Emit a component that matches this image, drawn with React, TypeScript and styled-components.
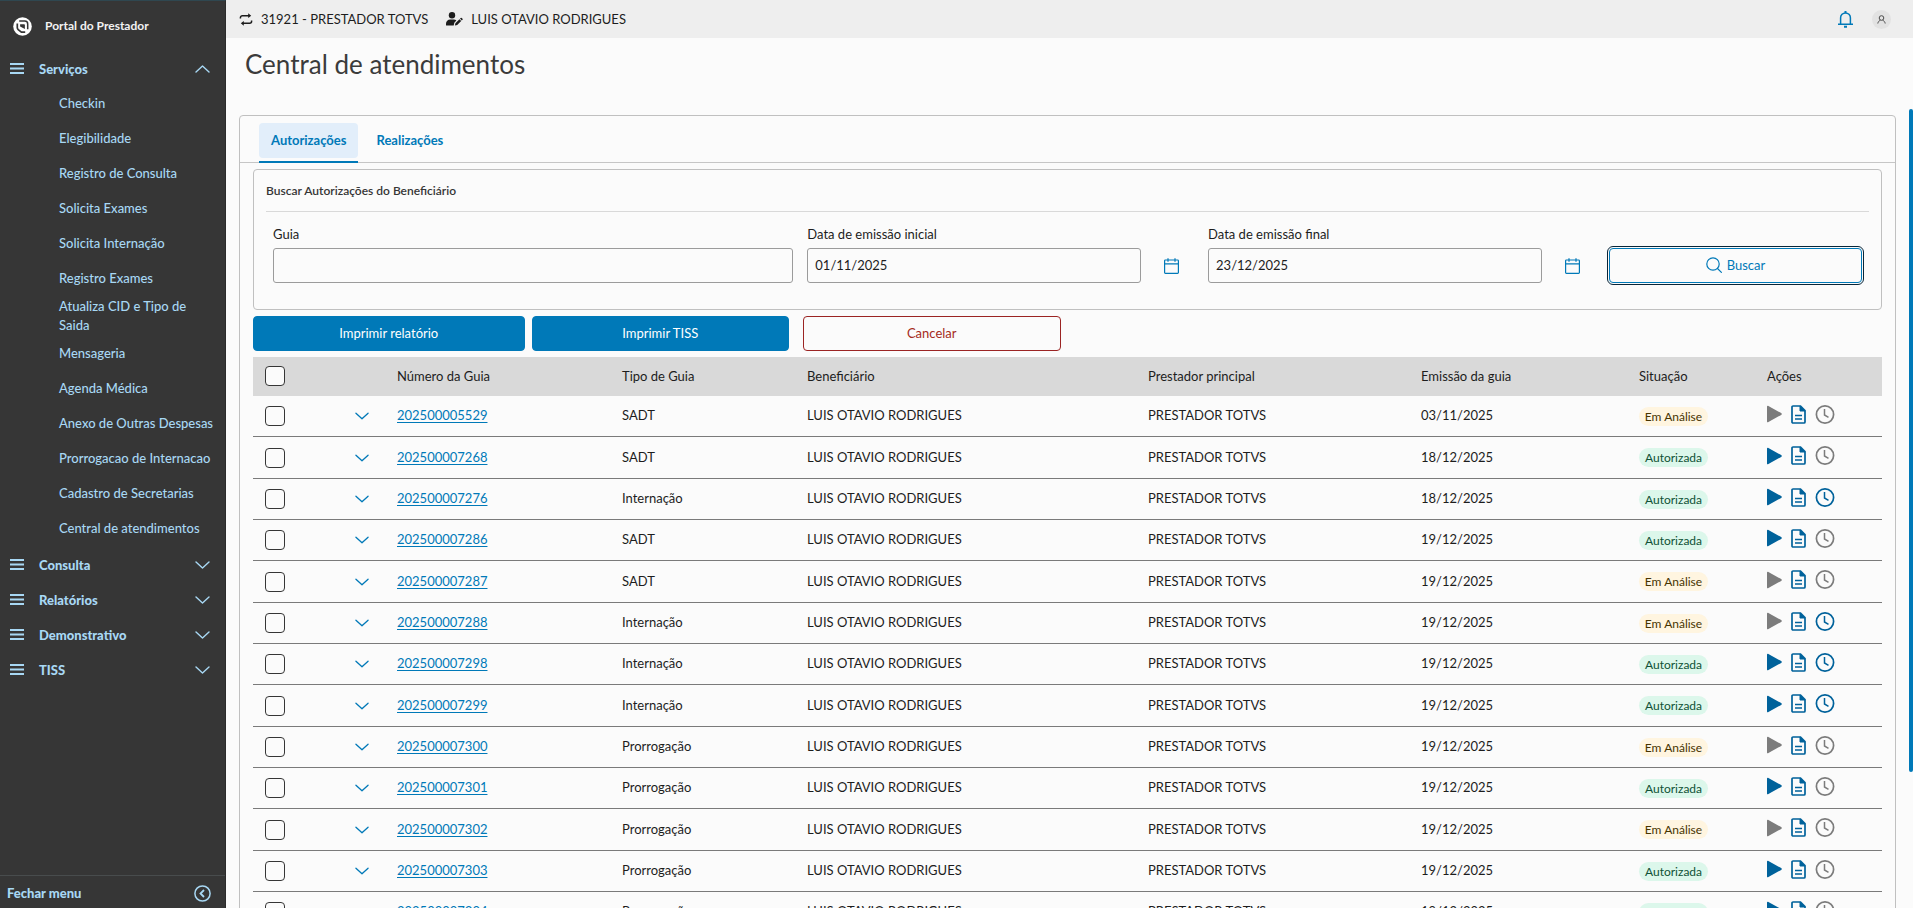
import React from 'react';
import styled, { createGlobalStyle, css } from 'styled-components';

const blue = '#0079b8';
const deepBlue = '#00629b';
const gray = '#7c7c7c';

const GlobalStyle = createGlobalStyle`
  *, *::before, *::after { box-sizing: border-box; }
  body {
    margin: 0;
    background: #fbfbfb;
    color: #1d1d1d;
    font-family: Lato, "Liberation Sans", sans-serif;
    font-size: 13px;
    line-height: 20px;
  }
  button, input { font: inherit; color: inherit; }
  svg { display: block; }
`;

const Shell = styled.div`
  display: flex;
  height: 100vh;
  overflow: hidden;
`;

/* ---------- side menu ---------- */

const Sidebar = styled.aside`
  flex: none;
  display: flex;
  flex-direction: column;
  width: 226px;
  background: #363636;
  border-top: 1px solid #2f4750;
  border-right: 1px solid #2b2b2b;
  color: #a8d8f4;
`;

const Brand = styled.div`
  display: flex;
  align-items: center;
  gap: 13px;
  height: 50px;
  padding-left: 13px;
  color: #f2f2f2;
  font-size: 12px;
  font-weight: 700;
`;

const MenuNav = styled.nav`
  flex: 1;
`;

const MenuGroup = styled.button`
  display: flex;
  align-items: center;
  width: 100%;
  height: 35px;
  padding: 0 15px 0 10px;
  border: 0;
  background: none;
  font-weight: 900;
  text-align: left;
`;

const GroupLabel = styled.span`
  flex: 1;
  margin-left: 15px;
`;

const SubMenu = styled.ul`
  margin: 0;
  padding: 0 0 1px;
  list-style: none;
`;

const SubItem = styled.li`
  display: flex;
  align-items: center;
  min-height: 35px;
  padding: 1px 10px 1px 59px;
`;

const SubLink = styled.a`
  color: inherit;
  font-weight: 500;
  line-height: 19px;
  text-decoration: none;
`;

const CloseMenu = styled.button`
  display: flex;
  align-items: center;
  justify-content: space-between;
  height: 33px;
  padding: 2px 14px 0 7px;
  border: 0;
  border-top: 1px solid #484c4d;
  background: none;
  font-weight: 900;
`;

/* ---------- top bar and page ---------- */

const Main = styled.div`
  position: relative;
  flex: 1;
  min-width: 0;
  display: flex;
  flex-direction: column;
`;

const TopBar = styled.header`
  flex: none;
  display: flex;
  align-items: center;
  height: 38px;
  padding: 0 22px 0 13px;
  background: #eeeeee;
`;

const TopInfo = styled.span`
  display: flex;
  align-items: center;
  gap: 8px;
  margin-right: 18px;
`;

const TopActions = styled.div`
  display: flex;
  align-items: center;
  gap: 19px;
  margin-left: auto;
`;

const IconButton = styled.button`
  display: flex;
  align-items: center;
  justify-content: center;
  padding: 0;
  border: 0;
  background: none;
  color: ${blue};
`;

const Avatar = styled.span`
  display: flex;
  align-items: center;
  justify-content: center;
  width: 19px;
  height: 19px;
  border-radius: 50%;
  background: #e2e2e2;
  color: #4a4a4a;
`;

const Content = styled.main`
  flex: 1;
  min-height: 0;
  overflow: hidden;
  padding: 0 17px 0 13px;
`;

const Title = styled.h1`
  margin: 0;
  padding: 8px 6px 33px;
  color: #3b3b3b;
  font-size: 26px;
  font-weight: 400;
  line-height: 36px;
`;

const ScrollThumb = styled.div`
  position: absolute;
  top: 109px;
  right: 0;
  width: 4px;
  height: 73vh;
  border-radius: 2px;
  background: ${blue};
`;

const Panel = styled.section`
  border: 1px solid #c0c0c0;
  border-radius: 4px 4px 0 0;
`;

const Tabs = styled.div`
  display: flex;
  gap: 6px;
  height: 47px;
  padding: 7px 19px 0;
  border-bottom: 1px solid #c6c6c6;
`;

const Tab = styled.button<{ $active?: boolean }>`
  height: 40px;
  padding: 0;
  border: 0;
  border-bottom: 2px solid ${(p) => (p.$active ? blue : 'transparent')};
  background: none;
  color: ${blue};
  font-weight: 700;
`;

const TabFace = styled.span<{ $active?: boolean }>`
  display: block;
  height: 35px;
  margin-bottom: 3px;
  padding: 0 12px;
  border-radius: 4px;
  background: ${(p) => (p.$active ? '#e2eefa' : 'none')};
  line-height: 34px;
`;

const PanelBody = styled.div`
  padding: 6px 13px 0;
`;

/* ---------- search form ---------- */

const SearchBox = styled.form`
  height: 141px;
  padding: 11px 12px;
  border: 1px solid #c0c0c0;
  border-radius: 4px;
`;

const SearchTitle = styled.h2`
  margin: 0 0 12px;
  padding-bottom: 10px;
  border-bottom: 1px solid #d9d9d9;
  color: #363636;
  font-size: 12px;
  font-weight: 600;
  line-height: 20px;
`;

const SearchGrid = styled.div`
  display: grid;
  grid-template-columns: repeat(12, 1fr);
  align-items: end;
`;

const Field = styled.div<{ $span: number }>`
  grid-column: span ${(p) => p.$span};
  padding: 0 7px;
`;

const FieldLabel = styled.label`
  display: block;
  margin-bottom: 4px;
`;

const FieldRow = styled.div`
  display: flex;
  align-items: center;
`;

const TextInput = styled.input`
  flex: 1;
  min-width: 0;
  height: 35px;
  padding: 0 7px 1px;
  border: 1px solid #9b9b9b;
  border-radius: 3px;
  background: #fbfbfb;
`;

const CalendarButton = styled(IconButton)`
  width: 53px;
  padding-left: 8px;
`;

const buttonBase = css`
  display: flex;
  align-items: center;
  justify-content: center;
  gap: 5px;
  width: 100%;
  height: 35px;
  padding: 0 0 1px;
  border-radius: 4px;
`;

const SearchButton = styled.button`
  ${buttonBase}
  border: 1px solid ${blue};
  outline: 1px solid #08263a;
  outline-offset: 1px;
  background: #fbfbfb;
  color: ${blue};
`;

const ActionGrid = styled.div`
  display: grid;
  grid-template-columns: repeat(6, 1fr);
  margin: 6px 0;
`;

const ActionSlot = styled.div<{ $first?: boolean }>`
  padding: ${(p) => (p.$first ? '0' : '0 7px')};
`;

const ActionButton = styled.button<{ $danger?: boolean }>`
  ${buttonBase}
  border: 1px solid ${(p) => (p.$danger ? '#9b2423' : blue)};
  background: ${(p) => (p.$danger ? '#fbfbfb' : blue)};
  color: ${(p) => (p.$danger ? '#a52a20' : '#ffffff')};
`;

/* ---------- table ---------- */

const Table = styled.table`
  width: 100%;
  table-layout: fixed;
  border-spacing: 0;
`;

const HeadCell = styled.th`
  height: 39px;
  padding: 0 0 1px 12px;
  background: #d9d9d9;
  font-weight: 400;
  text-align: left;
`;

const BodyRow = styled.tr`
  height: 41px;
  &:nth-child(3n + 2) { height: 42px; }
`;

const Cell = styled.td`
  padding: 0 0 2px 12px;
  border-bottom: 1px solid #7a7a7a;
`;

const CheckCell = styled(Cell)`
  padding-bottom: 0;
`;

const ActionsCell = styled(Cell)`
  padding-bottom: 4px;
`;

const Check = styled.input`
  appearance: none;
  display: block;
  width: 20px;
  height: 20px;
  margin: 0;
  border: 1px solid #363636;
  border-radius: 4px;
  background: #fbfbfb;
`;

const GuideLink = styled.a`
  color: ${blue};
  text-decoration: underline;
  text-underline-offset: 2px;
`;

const Badge = styled.span<{ $ok: boolean }>`
  display: block;
  width: 69px;
  height: 19px;
  margin-top: 2px;
  border-radius: 10px;
  background: ${(p) => (p.$ok ? '#dcf7eb' : '#fff5e0')};
  color: ${(p) => (p.$ok ? '#0f5236' : '#473400')};
  font-size: 12px;
  line-height: 19px;
  text-align: center;
`;

const RowActions = styled.div`
  display: flex;
  align-items: center;
  gap: 9px;
`;

const RowAction = styled(IconButton)<{ $on: boolean }>`
  color: ${(p) => (p.$on ? deepBlue : gray)};
`;

/* ---------- icons ---------- */

const Logo = () => (
  <svg width="19" height="19" viewBox="0 0 19 19" fill="none">
    <circle cx="9.5" cy="9.5" r="9.3" fill="#fff" />
    <path d="M6.2 4.1h5.6c1.700 0 2.900 1.200 2.900 2.900v5.200" stroke="#363636" strokeWidth="1.500" />
    <path d="M4.300 6.400v4.400c0 .8.300 1.300.9 1.800l3.200 2.600h3.800" stroke="#363636" strokeWidth="1.700" />
    <path d="M7.100 7.200h4.100c.4 0 .7.300.7.700v4.200L7.100 9.400z" fill="#363636" />
  </svg>
);

const MenuIcon = () => (
  <svg width="14" height="11" viewBox="0 0 14 11" fill="currentColor">
    <path d="M0 0h14v2H0zM0 4.500h14v2H0zM0 9h14v2H0z" />
  </svg>
);

const Chevron = ({ up = false, width = 15 }: { up?: boolean; width?: number }) => (
  <svg width={width} height="8" viewBox="0 0 15 8" fill="none" stroke="currentColor" strokeWidth="1.400" strokeLinecap="round" strokeLinejoin="round">
    <path d={up ? 'M1 7l6.500-6 6.500 6' : 'M1 1l6.500 6L14 1'} />
  </svg>
);

const CircleLeft = () => (
  <svg width="17" height="17" viewBox="0 0 17 17" fill="none" stroke="currentColor" strokeWidth="1.500">
    <circle cx="8.500" cy="8.500" r="7.600" />
    <path d="M10 5L6.500 8.500 10 12" strokeWidth="1.800" />
  </svg>
);

const RepeatIcon = () => (
  <svg width="14" height="13" viewBox="0 0 14 13">
    <path d="M1.400 5.600V4.700a2 2 0 0 1 2-2H10M12.600 7.400v.9a2 2 0 0 1-2 2H4" fill="none" stroke="currentColor" strokeWidth="1.500" />
    <path d="M9.200.3l3 2.400-3 2.400zM4.800 7.900l-3 2.400 3 2.400z" fill="currentColor" />
  </svg>
);

const UserPenIcon = () => (
  <svg width="17" height="14" viewBox="0 0 17 14" fill="currentColor">
    <circle cx="6" cy="3.300" r="3.200" />
    <path d="M0 13v-1.200A4.200 4.200 0 0 1 4.200 7.600h3.600c1 0 1.900.300 2.600.9L8.300 10.700 7.700 13.500H.5A.5.5 0 0 1 0 13z" />
    <path d="M8.900 13.500l.500-2.300 4-4 1.800 1.800-4 4zM14 6.600l.7-.7a.7.700 0 0 1 1 0l.8.8a.7.700 0 0 1 0 1l-.7.700z" />
  </svg>
);

const BellIcon = () => (
  <svg width="15" height="17" viewBox="0 0 15 17" fill="none" stroke="currentColor" strokeWidth="1.500">
    <path d="M2.600 13V6.800a4.900 4.900 0 0 1 9.800 0V13M0 13.300h15" />
    <path d="M7.500 0v2M6 15.700h3" strokeWidth="2" />
  </svg>
);

const PersonIcon = () => (
  <svg width="9" height="9" viewBox="0 0 9 9" fill="none" stroke="currentColor">
    <circle cx="4.500" cy="3" r="2.300" />
    <path d="M.8 8.500c.300-1.700 1.300-2.800 2.500-3.200M8.200 8.500C7.900 6.800 6.900 5.700 5.700 5.300" />
  </svg>
);

const CalendarIcon = () => (
  <svg width="15" height="16" viewBox="0 0 15 16" fill="none" stroke="currentColor" strokeWidth="1.200">
    <rect x=".6" y="2" width="13.800" height="13.400" rx=".8" />
    <path d="M.6 5.800h13.800M4 .2v3.600M11 .2v3.600" />
  </svg>
);

const SearchIcon = () => (
  <svg width="16" height="16" viewBox="0 0 16 16" fill="none" stroke="currentColor" strokeWidth="1.200" strokeLinecap="round">
    <circle cx="7" cy="7" r="6.200" />
    <path d="M11.500 11.500l3.900 3.900" />
  </svg>
);

const PlayIcon = () => (
  <svg width="15" height="18" viewBox="0 0 15 18" fill="currentColor">
    <path d="M0 1.600C0 .8.7.5 1.400.9l12.800 7.200c.8.500.8 1.300 0 1.800L1.400 17.100C.7 17.500 0 17.200 0 16.400z" />
  </svg>
);

const DocIcon = () => (
  <svg width="15" height="19" viewBox="0 0 15 19" fill="none" stroke="currentColor">
    <path d="M2 1h7.500L14 5.500V17a1 1 0 0 1-1 1H2a1 1 0 0 1-1-1V2a1 1 0 0 1 1-1z" strokeWidth="1.700" />
    <path d="M9 1v5h5z" fill="currentColor" />
    <path d="M4 10.500h7M4 14h7" strokeWidth="1.400" />
  </svg>
);

const ClockIcon = () => (
  <svg width="20" height="19" viewBox="0 0 20 19" fill="none" stroke="currentColor" strokeWidth="1.700">
    <circle cx="10" cy="9.500" r="8.600" />
    <path d="M9.500 4v6l4 2.300" strokeWidth="1.500" />
  </svg>
);

/* ---------- data ---------- */

const serviceItems = [
  'Checkin', 'Elegibilidade', 'Registro de Consulta', 'Solicita Exames', 'Solicita Internação',
  'Registro Exames', 'Atualiza CID e Tipo de Saida', 'Mensageria', 'Agenda Médica',
  'Anexo de Outras Despesas', 'Prorrogacao de Internacao', 'Cadastro de Secretarias', 'Central de atendimentos',
];

const closedGroups = ['Consulta', 'Relatórios', 'Demonstrativo', 'TISS'];

const columnWidths = [90, 42, 225, 185, 341, 273, 218, 128, 127];

type Guide = [id: string, kind: string, date: string, approved: boolean, clock: boolean];

const guides: Guide[] = [
  ['202500005529', 'SADT', '03/11/2025', false, false],
  ['202500007268', 'SADT', '18/12/2025', true, false],
  ['202500007276', 'Internação', '18/12/2025', true, true],
  ['202500007286', 'SADT', '19/12/2025', true, false],
  ['202500007287', 'SADT', '19/12/2025', false, false],
  ['202500007288', 'Internação', '19/12/2025', false, true],
  ['202500007298', 'Internação', '19/12/2025', true, true],
  ['202500007299', 'Internação', '19/12/2025', true, true],
  ['202500007300', 'Prorrogação', '19/12/2025', false, false],
  ['202500007301', 'Prorrogação', '19/12/2025', true, false],
  ['202500007302', 'Prorrogação', '19/12/2025', false, false],
  ['202500007303', 'Prorrogação', '19/12/2025', true, false],
  ['202500007304', 'Prorrogação', '19/12/2025', true, false],
];

const DateField = ({ id, label, value }: { id: string; label: string; value: string }) => (
  <Field $span={3}>
    <FieldLabel htmlFor={id}>{label}</FieldLabel>
    <FieldRow>
      <TextInput id={id} defaultValue={value} />
      <CalendarButton type="button" aria-label={`Abrir calendário: ${label}`}><CalendarIcon /></CalendarButton>
    </FieldRow>
  </Field>
);

export default function App() {
  return (
    <>
      <GlobalStyle />
      <Shell>
        <Sidebar>
          <Brand><Logo />Portal do Prestador</Brand>
          <MenuNav>
            <MenuGroup aria-expanded="true"><MenuIcon /><GroupLabel>Serviços</GroupLabel><Chevron up /></MenuGroup>
            <SubMenu>
              {serviceItems.map((item) => (
                <SubItem key={item}><SubLink href="#">{item}</SubLink></SubItem>
              ))}
            </SubMenu>
            {closedGroups.map((group) => (
              <MenuGroup key={group} aria-expanded="false"><MenuIcon /><GroupLabel>{group}</GroupLabel><Chevron /></MenuGroup>
            ))}
          </MenuNav>
          <CloseMenu>Fechar menu<CircleLeft /></CloseMenu>
        </Sidebar>

        <Main>
          <TopBar>
            <TopInfo><RepeatIcon />31921 - PRESTADOR TOTVS</TopInfo>
            <TopInfo><UserPenIcon />LUIS OTAVIO RODRIGUES</TopInfo>
            <TopActions>
              <IconButton aria-label="Notificações"><BellIcon /></IconButton>
              <Avatar><PersonIcon /></Avatar>
            </TopActions>
          </TopBar>

          <Content>
            <Title>Central de atendimentos</Title>
            <Panel>
              <Tabs role="tablist">
                <Tab role="tab" aria-selected="true" $active><TabFace $active>Autorizações</TabFace></Tab>
                <Tab role="tab" aria-selected="false"><TabFace>Realizações</TabFace></Tab>
              </Tabs>
              <PanelBody>
                <SearchBox onSubmit={(e) => e.preventDefault()}>
                  <SearchTitle>Buscar Autorizações do Beneficiário</SearchTitle>
                  <SearchGrid>
                    <Field $span={4}>
                      <FieldLabel htmlFor="guia">Guia</FieldLabel>
                      <FieldRow><TextInput id="guia" /></FieldRow>
                    </Field>
                    <DateField id="inicio" label="Data de emissão inicial" value="01/11/2025" />
                    <DateField id="fim" label="Data de emissão final" value="23/12/2025" />
                    <Field $span={2}><SearchButton type="submit"><SearchIcon />Buscar</SearchButton></Field>
                  </SearchGrid>
                </SearchBox>

                <ActionGrid>
                  <ActionSlot $first><ActionButton>Imprimir relatório</ActionButton></ActionSlot>
                  <ActionSlot><ActionButton>Imprimir TISS</ActionButton></ActionSlot>
                  <ActionSlot><ActionButton $danger>Cancelar</ActionButton></ActionSlot>
                </ActionGrid>

                <Table>
                  <colgroup>
                    {columnWidths.map((width, i) => <col key={i} width={width} />)}
                  </colgroup>
                  <thead>
                    <tr>
                      <HeadCell><Check type="checkbox" aria-label="Selecionar todas" /></HeadCell>
                      <HeadCell />
                      <HeadCell>Número da Guia</HeadCell>
                      <HeadCell>Tipo de Guia</HeadCell>
                      <HeadCell>Beneficiário</HeadCell>
                      <HeadCell>Prestador principal</HeadCell>
                      <HeadCell>Emissão da guia</HeadCell>
                      <HeadCell>Situação</HeadCell>
                      <HeadCell>Ações</HeadCell>
                    </tr>
                  </thead>
                  <tbody>
                    {guides.map(([id, kind, date, approved, clock]) => (
                      <BodyRow key={id}>
                        <CheckCell><Check type="checkbox" aria-label={`Selecionar guia ${id}`} /></CheckCell>
                        <CheckCell><IconButton aria-label={`Expandir guia ${id}`}><Chevron width={14} /></IconButton></CheckCell>
                        <Cell><GuideLink href="#">{id}</GuideLink></Cell>
                        <Cell>{kind}</Cell>
                        <Cell>LUIS OTAVIO RODRIGUES</Cell>
                        <Cell>PRESTADOR TOTVS</Cell>
                        <Cell>{date}</Cell>
                        <Cell><Badge $ok={approved}>{approved ? 'Autorizada' : 'Em Análise'}</Badge></Cell>
                        <ActionsCell>
                          <RowActions>
                            <RowAction $on={approved} aria-label="Executar"><PlayIcon /></RowAction>
                            <RowAction $on aria-label="Documento"><DocIcon /></RowAction>
                            <RowAction $on={clock} aria-label="Histórico"><ClockIcon /></RowAction>
                          </RowActions>
                        </ActionsCell>
                      </BodyRow>
                    ))}
                  </tbody>
                </Table>
              </PanelBody>
            </Panel>
          </Content>
          <ScrollThumb />
        </Main>
      </Shell>
    </>
  );
}
